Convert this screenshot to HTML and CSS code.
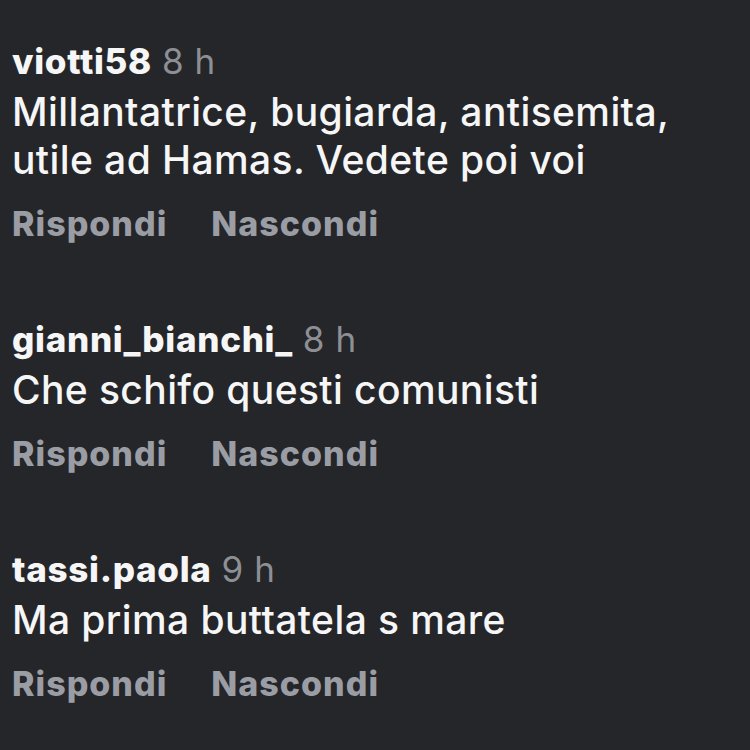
FILE: index.html
```html
<!DOCTYPE html>
<html>
<head>
	<title>Commenti</title>
	<link rel="stylesheet" href="styles.css">
</head>
<body>
	<div class="comments">
		<div class="comment">
			<div class="meta"><span class="user">viotti58</span> <span class="time">8 h</span></div>
			<div class="text">Millantatrice, bugiarda, antisemita, utile ad Hamas. Vedete poi voi</div>
			<div class="actions"><span>Rispondi</span><span>Nascondi</span></div>
		</div>
		<div class="comment">
			<div class="meta"><span class="user">gianni_bianchi_</span> <span class="time">8 h</span></div>
			<div class="text">Che schifo questi comunisti</div>
			<div class="actions"><span>Rispondi</span><span>Nascondi</span></div>
		</div>
		<div class="comment">
			<div class="meta"><span class="user">tassi.paola</span> <span class="time">9 h</span></div>
			<div class="text">Ma prima buttatela s mare</div>
			<div class="actions"><span>Rispondi</span><span>Nascondi</span></div>
		</div>
	</div>
</body>
</html>
```

FILE: styles.css
```css
html, body {
	margin: 0;
	background-color: #25262a;
}
body {
	font-family: "Inter", "Noto Sans", sans-serif;
	color: #f6f6f7;
	height: 750px;
	overflow: hidden;
}
.comments {
	display: flex;
	flex-direction: column;
	gap: 71px;
	padding: 39px 12px 0 12px;
}
.comment {
	display: flex;
	flex-direction: column;
}
.meta {
	font-size: 35px;
	line-height: 44px;
	white-space: nowrap;
}
.user {
	font-weight: 800;
	letter-spacing: 0.7px;
}
.time {
	color: #8e8f94;
	letter-spacing: 0.6px;
}
.text {
	margin-top: 5px;
	font-size: 39px;
	line-height: 48px;
	font-weight: 500;
	letter-spacing: 0.4px;
	width: 700px;
}
.actions {
	display: flex;
	gap: 44px;
	margin-top: 18px;
	font-size: 34px;
	line-height: 44px;
	font-weight: 800;
	letter-spacing: 1px;
	color: #9b9da4;
}
```
